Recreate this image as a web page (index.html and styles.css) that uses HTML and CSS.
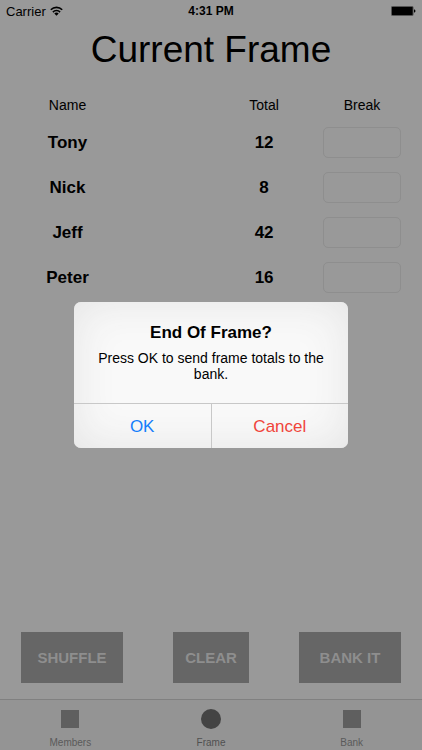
FILE: index.html
```html
<!DOCTYPE html>
<html lang="en">
<head>
<meta charset="utf-8">
<meta name="viewport" content="width=device-width, initial-scale=1">
<title>Current Frame</title>
<link rel="stylesheet" href="styles.css">
</head>
<body>
<div class="app">
  <div class="status">
    <div class="carrier">
      <span>Carrier</span>
      <svg class="wifi" viewBox="0 0 26 20" aria-hidden="true">
        <g fill="none" stroke="#000" stroke-width="3.2">
          <path d="M1.6 7.6a16 16 0 0 1 22.8 0"/>
          <path d="M5.8 12.2a10 10 0 0 1 14.4 0"/>
        </g>
        <path d="M13 19.5l-4.4-4.4a6.2 6.2 0 0 1 8.8 0z"/>
      </svg>
    </div>
    <div class="time">4:31 PM</div>
    <div class="power">
      <svg class="battery" viewBox="0 0 50 20" aria-hidden="true">
        <rect x="0.5" y="0.5" width="44" height="19" rx="2.5" fill="none" stroke="#333"/>
        <rect x="1.5" y="1.5" width="42" height="17" rx="1.5"/>
        <path d="M46 6.5q3 .8 3 3.5t-3 3.5z"/>
      </svg>
    </div>
  </div>

  <main class="content">
    <h1 class="title">Current Frame</h1>
    <table class="scores">
      <thead>
        <tr><th class="name">Name</th><th class="total">Total</th><th class="break">Break</th></tr>
      </thead>
      <tbody>
        <tr><td class="name">Tony</td><td class="total">12</td><td class="break"><input type="text" aria-label="Break for Tony"></td></tr>
        <tr><td class="name">Nick</td><td class="total">8</td><td class="break"><input type="text" aria-label="Break for Nick"></td></tr>
        <tr><td class="name">Jeff</td><td class="total">42</td><td class="break"><input type="text" aria-label="Break for Jeff"></td></tr>
        <tr><td class="name">Peter</td><td class="total">16</td><td class="break"><input type="text" aria-label="Break for Peter"></td></tr>
      </tbody>
    </table>
    <div class="actions">
      <button class="action wide" type="button">SHUFFLE</button>
      <button class="action" type="button">CLEAR</button>
      <button class="action wide" type="button">BANK IT</button>
    </div>
  </main>

  <nav class="tabs">
    <a class="tab" href="#members"><span class="icon"><span class="square"></span></span>Members</a>
    <a class="tab current" href="#frame"><span class="icon"><span class="circle"></span></span>Frame</a>
    <a class="tab" href="#bank"><span class="icon"><span class="square"></span></span>Bank</a>
  </nav>

  <div class="overlay">
    <div class="alert" role="alertdialog" aria-labelledby="alert-title" aria-describedby="alert-text">
      <div class="message">
        <h2 id="alert-title">End Of Frame?</h2>
        <p id="alert-text">Press OK to send frame totals to the bank.</p>
      </div>
      <div class="choices">
        <button class="ok" type="button">OK</button>
        <button class="cancel" type="button">Cancel</button>
      </div>
    </div>
  </div>
</div>
</body>
</html>
```
FILE: styles.css
```css
* {
  box-sizing: border-box;
}

body {
  margin: 0;
  background: #999;
  color: #000;
  font-family: "Liberation Sans", Arial, sans-serif;
}

button,
input {
  font: inherit;
}

.app {
  position: relative;
  display: flex;
  flex-direction: column;
  min-height: 100vh;
}

.status {
  display: grid;
  grid-template-columns: 1fr auto 1fr;
  align-items: center;
  height: 22px;
  padding: 0 6px;
  font-size: 12px;
}

.carrier {
  display: flex;
  align-items: center;
  gap: 4px;
  font-size: 13px;
}

.wifi {
  width: 13px;
  height: 10px;
}

.time {
  font-weight: bold;
}

.power {
  display: flex;
  justify-content: flex-end;
}

.battery {
  width: 25px;
  height: 10px;
}

.content {
  flex: 1;
  display: flex;
  flex-direction: column;
  padding: 0 21px 16px;
}

.title {
  margin: 4px 0 15px;
  font-size: 37px;
  font-weight: normal;
  line-height: 48px;
  text-align: center;
}

.scores {
  width: 100%;
  table-layout: fixed;
  border-collapse: collapse;
  font-size: 17px;
  font-weight: bold;
  text-align: center;
}

.scores th {
  height: 31px;
  padding: 0;
  font-size: 14px;
  font-weight: normal;
}

.scores td {
  height: 45px;
  padding: 0;
}

.scores .name {
  padding-right: 24%;
}

.scores .total {
  width: 31%;
}

.scores .break {
  width: 78px;
}

.scores input {
  display: block;
  width: 100%;
  height: 31px;
  padding: 0 8px;
  border: 1px solid #8e8e8e;
  border-radius: 5px;
  background: #999;
}

.actions {
  display: flex;
  justify-content: space-between;
  margin-top: auto;
}

.action {
  width: 76px;
  height: 51px;
  padding: 0;
  border: 0;
  background: #666;
  color: #8e8e8e;
  font-size: 15px;
  font-weight: bold;
}

.action.wide {
  width: 102px;
}

.tabs {
  display: flex;
  height: 51px;
  border-top: 1px solid #808080;
  background: #949494;
}

.tab {
  flex: 1;
  display: flex;
  flex-direction: column;
  align-items: center;
  padding-top: 8px;
  color: #5a5a5a;
  font-size: 10px;
  line-height: 12px;
  text-decoration: none;
}

.icon {
  display: flex;
  align-items: center;
  justify-content: center;
  height: 22px;
  margin-bottom: 7px;
}

.square {
  width: 18px;
  height: 18px;
  background: #5f5f5f;
}

.circle {
  width: 20px;
  height: 20px;
  border-radius: 50%;
  background: #444;
}

.tab.current {
  color: #505050;
}

.overlay {
  position: absolute;
  inset: 0;
  display: flex;
  align-items: center;
  justify-content: center;
}

.alert {
  width: 65%;
  overflow: hidden;
  border-radius: 7px;
  background: #f9f9f9;
  box-shadow: inset 0 0 44px #e4e4e4;
  text-align: center;
}

.message {
  padding: 20px 20px 21px;
}

.message h2 {
  margin: 0 0 6px;
  font-size: 17px;
  line-height: 22px;
}

.message p {
  margin: 0;
  font-size: 14px;
  line-height: 16px;
}

.choices {
  display: flex;
  border-top: 1px solid #c8c8c8;
}

.choices button {
  flex: 1;
  height: 44px;
  padding: 2px 0 0;
  border: 0;
  background: transparent;
  font-size: 17px;
}

.choices .ok {
  color: #157efb;
}

.choices .cancel {
  border-left: 1px solid #c8c8c8;
  color: #f0443a;
}
```
